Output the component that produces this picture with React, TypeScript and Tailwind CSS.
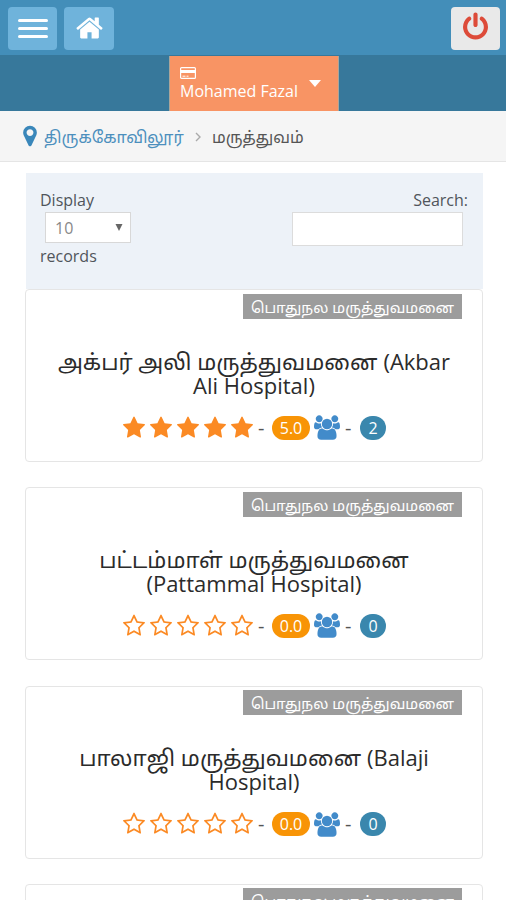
import React from "react";

const STAR =
  "M1664 647q0 22-26 48l-363 354 86 500q1 7 1 20 0 21-10.5 35.5t-30.5 14.5q-19 0-40-12l-449-236-449 236q-22 12-40 12-21 0-31.5-14.5t-10.5-35.5q0-6 2-20l86-500-364-354q-25-27-25-48 0-37 56-46l502-73 225-455q19-41 49-41t49 41l225 455 502 73q56 9 56 46z";
const STAR_O =
  "M1137 1004l306-297-422-62-189-382-189 382-422 62 306 297-73 421 378-199 377 199zm527-357q0 22-26 48l-363 354 86 500q1 7 1 20 0 50-41 50-19 0-40-12l-449-236-449 236q-22 12-40 12-21 0-31.5-14.5t-10.5-35.5q0-6 2-20l86-500-364-354q-25-27-25-48 0-37 56-46l502-73 225-455q19-41 49-41t49 41l225 455 502 73q56 9 56 46z";
const MARKER =
  "M768 640q0-106-75-181t-181-75-181 75-75 181 75 181 181 75 181-75 75-181zm256 0q0 109-33 179l-364 774q-16 33-47.5 52t-67.5 19-67.5-19-46.5-52l-365-774q-33-70-33-179 0-212 150-362t362-150 362 150 150 362z";
const POWER =
  "M1536 896q0 156-61 298t-164 245-245 164-298 61-298-61-245-164-164-245-61-298q0-182 80.5-343t226.5-270q43-32 95.5-25t83.5 50q32 42 24.5 94.5t-49.5 84.5q-98 74-151.5 181t-53.5 228q0 104 40.5 198.5t109.5 163.5 163.5 109.5 198.5 40.5 198.5-40.5 163.5-109.5 109.5-163.5 40.5-198.5q0-121-53.5-228t-151.5-181q-42-32-49.5-84.5t24.5-94.5q31-43 84-50t95 25q146 109 226.5 270t80.5 343zm-640-768v640q0 52-38 90t-90 38-90-38-38-90v-640q0-52 38-90t90-38 90 38 38 90z";
const USERS =
  "M593 896q-162 5-265 128h-134q-82 0-138-40.5t-56-118.5q0-353 124-353 6 0 43.5 21t97.5 42.5 119 21.5q67 0 133-23-5 37-5 66 0 139 81 256zm1071 637q0 120-73 189.5t-194 69.5h-874q-121 0-194-69.5t-73-189.5q0-53 3.5-103.5t14-109 26.5-108.5 43-97.5 62-81 85.5-53.5 111.5-20q10 0 43 21.5t73 48 107 48 135 21.5 135-21.5 107-48 73-48 43-21.5q61 0 111.5 20t85.5 53.5 62 81 43 97.5 26.5 108.5 14 109 3.5 103.5zm-1024-1277q0 106-75 181t-181 75-181-75-75-181 75-181 181-75 181 75 75 181zm704 384q0 159-112.5 271.5t-271.5 112.5-271.5-112.5-112.5-271.5 112.5-271.5 271.5-112.5 271.5 112.5 112.5 271.5zm576 225q0 78-56 118.5t-138 40.5h-134q-103-123-265-128 81-117 81-256 0-29-5-66 66 23 133 23 59 0 119-21.5t97.5-42.5 43.5-21q124 0 124 353zm-128-609q0 106-75 181t-181 75-181-75-75-181 75-181 181-75 181 75 75 181z";
const HOME =
  "M1408 992v480q0 26-19 45t-45 19h-384v-384h-256v384h-384q-26 0-45-19t-19-45v-480q0-1 .5-3t.5-3l575-474 575 474q1 2 1 6zm223-69l-62 74q-8 9-21 11h-3q-13 0-21-7l-692-577-692 577q-12 8-24 7-13-2-21-11l-62-74q-8-10-7-23.5t11-21.5l719-599q32-26 76-26t76 26l244 204v-195q0-14 9-23t23-9h192q14 0 23 9t9 23v408l219 182q10 8 11 21.5t-7 23.5z";

function Icon({ d, box, className }: { d: string; box: string; className: string }) {
  return (
    <svg viewBox={box} className={className} fill="currentColor" aria-hidden="true">
      <path d={d} />
    </svg>
  );
}

interface Hospital {
  tamil: string;
  rest: string;
  second: string;
  score: string;
  rated: boolean;
  votes: string;
}

const hospitals: Hospital[] = [
  { tamil: "அக்பர் அலி மருத்துவமனை", rest: "(Akbar", second: "Ali Hospital)", score: "5.0", rated: true, votes: "2" },
  { tamil: "பட்டம்மாள் மருத்துவமனை", rest: "", second: "(Pattammal Hospital)", score: "0.0", rated: false, votes: "0" },
  { tamil: "பாலாஜி மருத்துவமனை", rest: "(Balaji", second: "Hospital)", score: "0.0", rated: false, votes: "0" },
  { tamil: "", rest: "", second: "", score: "0.0", rated: false, votes: "0" },
];

function Card({ h }: { h: Hospital }) {
  return (
    <article className="mb-[25.3px] h-[173px] shrink-0 rounded-[4px] border-[1.5px] border-[#e5e5e5] bg-white">
      <div className="flex justify-end pt-[3.5px] pr-[20px]">
        <span className="flex h-[25px] w-[219px] items-center justify-center bg-[#9c9c9c] pt-[1px] text-[15px] leading-[24px] whitespace-nowrap text-white">
          பொதுநல மருத்துவமனை
        </span>
      </div>
      {h.tamil && (
        <>
          <h2 className="mt-[30px] text-center text-[22px] leading-[24px] text-[#2b2b2b]">
            <span className="flex h-[24px] items-baseline justify-center gap-[6px] whitespace-nowrap">
              <span className="pt-[1px] text-[22.2px] leading-[24px]">{h.tamil}</span>
              {h.rest && <span>{h.rest}</span>}
            </span>
            <span className="block whitespace-nowrap">{h.second}</span>
          </h2>
          <div className="mt-[18px] ml-[97px] flex h-[26px] items-center text-[#555]">
            <div className="flex gap-[5px] text-[#fb8a24]">
              {[0, 1, 2, 3, 4].map((i) => (
                <Icon key={i} d={h.rated ? STAR : STAR_O} box="0 0 1664 1792" className="h-[24px] w-[22px]" />
              ))}
            </div>
            <span className="ml-[5px] w-[14px] text-[20px]">-</span>
            <span className="flex h-[24px] w-[38px] items-center justify-center rounded-full bg-[#f89406] text-[16px] text-white">
              {h.score}
            </span>
            <Icon d={USERS} box="0 0 1920 1792" className="ml-[4px] h-[25px] w-[26px] text-[#428bca]" />
            <span className="ml-[5px] w-[15px] text-[20px]">-</span>
            <span className="flex h-[24px] w-[26px] items-center justify-center rounded-full bg-[#3a87ad] text-[16px] text-white">
              {h.votes}
            </span>
          </div>
        </>
      )}
    </article>
  );
}

export default function App() {
  return (
    <div className="flex h-[900px] w-[506px] flex-col overflow-hidden bg-white font-['Open_Sans','Noto_Sans_Tamil','FreeSans',sans-serif] text-[#555]">
      <header className="flex h-[55px] shrink-0 items-start bg-[#438eb9] px-[8px] pt-[7px]">
        <button className="flex h-[43px] w-[49px] flex-col items-center justify-center gap-[5px] rounded-[4px] bg-[#6fb3db]">
          <span className="h-[3px] w-[30px] rounded-sm bg-white" />
          <span className="h-[3px] w-[30px] rounded-sm bg-white" />
          <span className="h-[3px] w-[30px] rounded-sm bg-white" />
        </button>
        <button className="ml-[7px] flex h-[43px] w-[50px] items-center justify-center rounded-[4px] bg-[#6fb3db] text-white">
          <Icon d={HOME} box="0 0 1664 1792" className="-mt-[2px] h-[30px] w-[27px]" />
        </button>
        <button className="-mr-[2px] ml-auto flex h-[43px] w-[49px] items-center justify-center rounded-[4px] bg-[#e9e9e9] text-[#dd4b39]">
          <Icon d={POWER} box="0 0 1536 1792" className="-mt-[3px] h-[30px] w-[25px]" />
        </button>
      </header>
      <nav className="flex h-[56px] shrink-0 justify-center bg-[#37789b] pt-[1px] pl-[2px]">
        <div className="flex h-[55px] w-[170px] border-x border-[#a9a59b] bg-[#f89464] text-white">
          <div className="ml-[10px] w-[125px] pt-[11px]">
            <svg viewBox="0 0 16 12" className="h-[12px] w-[16px]">
              <rect x=".6" y=".6" width="14.8" height="10.8" rx="1" fill="none" stroke="currentColor" strokeWidth="1.2" />
              <rect x="1" y="3" width="14" height="3" fill="currentColor" />
              <path d="M2.5 9.2h3M6.5 9.2h2" stroke="currentColor" />
            </svg>
            <div className="text-[16px] leading-[24px] whitespace-nowrap">Mohamed Fazal</div>
          </div>
          <svg viewBox="0 0 12 7" className="mt-[24px] ml-[4px] h-[7px] w-[12px]">
            <path d="M0 0h12L6 7z" fill="currentColor" />
          </svg>
        </div>
      </nav>
      <div className="flex h-[51px] shrink-0 items-center border-b border-[#e5e5e5] bg-[#f5f5f5] pl-[23px] text-[16px] leading-[24px]">
        <Icon d={MARKER} box="0 0 1024 1792" className="h-[24px] w-[14px] text-[#3a87ba]" />
        <span className="ml-[7px] w-[140px] pt-[2px] text-[16.1px] whitespace-nowrap text-[#4c8fbd]">திருக்கோவிலூர்</span>
        <svg viewBox="0 0 6 10" className="mt-[2px] ml-[11px] h-[10px] w-[6px]">
          <path d="M1 1l4 4-4 4" fill="none" stroke="#aaa" strokeWidth="1.4" />
        </svg>
        <span className="ml-[11px] pt-[2px] whitespace-nowrap">மருத்துவம்</span>
      </div>
      <main className="flex flex-1 flex-col overflow-hidden pt-[11px] pr-[23px] pl-[25px]">
        <section className="ml-[1px] flex h-[116px] shrink-0 justify-between bg-[#edf2f8] px-[14px] pt-[15px] text-[16px] text-[#50555b]">
          <div>
            <div className="leading-[24px]">Display</div>
            <div className="ml-[5px] flex h-[31px] w-[86px] items-center justify-between border border-[#d8d8d8] bg-white pr-[7px] pl-[9px] text-[#888]">
              <span>10</span>
              <svg viewBox="0 0 8 8" className="h-[7px] w-[8px]">
                <path d="M0 0h8L4 8z" fill="#666" />
              </svg>
            </div>
            <div className="mt-[1px] leading-[24px]">records</div>
          </div>
          <div className="flex flex-col items-end">
            <div className="pr-[1px] leading-[24px]">Search:</div>
            <input aria-label="Search" className="mr-[6px] h-[34px] w-[171px] border border-[#dcdcdc] bg-white px-2 outline-none" />
          </div>
        </section>
        {hospitals.map((h, i) => (
          <Card key={i} h={h} />
        ))}
      </main>
    </div>
  );
}
